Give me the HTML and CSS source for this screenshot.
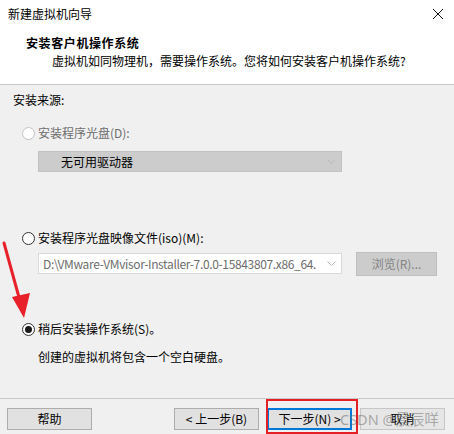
FILE: index.html
```html
<!DOCTYPE html>
<html lang="zh-CN">
<head>
<meta charset="utf-8">
<title>新建虚拟机向导</title>
<link rel="stylesheet" href="styles.css">
</head>
<body>
<div class="window">
  <div class="titlebar">
    <span class="title">新建虚拟机向导</span>
    <svg class="close" width="12" height="12" viewBox="0 0 12 12"><path d="M1 1 L11 11 M11 1 L1 11" stroke="#111" stroke-width="1" fill="none"/></svg>
  </div>
  <div class="header">
    <div class="h-title">安装客户机操作系统</div>
    <div class="h-sub">虚拟机如同物理机，需要操作系统。您将如何安装客户机操作系统?</div>
  </div>
  <div class="content">
    <div class="source">安装来源:</div>
    <div class="opt opt1 disabled"><span class="radio"></span><span>安装程序光盘(D):</span></div>
    <div class="combo combo-disabled"><span class="combo-text">无可用驱动器</span><svg class="chev" width="9" height="5" viewBox="0 0 9 5"><path d="M0.5 0.5 L4.5 4.5 L8.5 0.5" stroke="#b8b8b8" fill="none"/></svg></div>
    <div class="opt opt2"><span class="radio"></span><span>安装程序光盘映像文件(iso)(M):</span></div>
    <div class="iso-row">
      <div class="combo combo-iso"><span class="combo-text">D:\VMware-VMvisor-Installer-7.0.0-15843807.x86_64.</span><svg class="chev" width="9" height="5" viewBox="0 0 9 5"><path d="M0.5 0.5 L4.5 4.5 L8.5 0.5" stroke="#b8b8b8" fill="none"/></svg></div>
      <div class="btn btn-disabled browse">浏览(R)...</div>
    </div>
    <div class="opt opt3"><span class="radio checked"></span><span>稍后安装操作系统(S)。</span></div>
    <div class="desc">创建的虚拟机将包含一个空白硬盘。</div>
  </div>
  <div class="footer">
    <div class="btn">帮助</div>
    <div class="spacer"></div>
    <div class="btn">&lt; 上一步(B)</div>
    <div class="btn btn-default">下一步(N) &gt;</div>
    <div class="btn cancel">取消</div>
  </div>
  <div class="highlight"></div>
  <div class="watermark">CSDN @晨辰咩</div>
  <svg class="arrow" width="40" height="90" viewBox="0 0 40 90"><path d="M4 3 L20 61" stroke="#e8202a" stroke-width="3" fill="none" stroke-linecap="round"/><path d="M12 57 L30 53 L24 78 Z" fill="#e8202a"/></svg>
</div>
</body>
</html>
```

FILE: styles.css
```css
* { box-sizing: border-box; }
html, body { margin: 0; padding: 0; }
body {
  font-family: "Noto Sans CJK SC", "Microsoft YaHei", "Noto Sans", sans-serif;
  font-size: 12px;
  line-height: 16px;
  color: #000;
  background: #f0f0f0;
}
.window { position: relative; width: 454px; height: 434px; overflow: hidden; background: #f0f0f0; }
.titlebar {
  height: 28px;
  background: #fff;
  display: flex;
  align-items: center;
  justify-content: space-between;
  padding: 0 10px 0 8px;
}
.title { font-size: 12px; }
.close { display: block; }
.header {
  height: 57px;
  background: #fff;
  padding-top: 7px;
  border-bottom: 1px solid #c9c9c9;
}
.h-title { font-weight: bold; padding-left: 26px; height: 16px; letter-spacing: 0.6px; }
.h-sub { padding-left: 52px; margin-top: 2px; letter-spacing: 0; }
.content { height: 314px; padding-top: 7px; border-bottom: 1px solid #c9c9c9; }
.source { padding-left: 13px; height: 16px; }
.opt { display: flex; align-items: center; gap: 3px; padding-left: 22px; height: 16px; }
.opt1 { margin-top: 17px; }
.opt2 { margin-top: 58px; }
.opt3 { margin-top: 45px; }
.disabled { color: #6d6d6d; }
.radio {
  width: 13px; height: 13px; border-radius: 50%;
  border: 1px solid #333; background: #fff;
  display: inline-flex; align-items: center; justify-content: center;
  flex: none;
}
.disabled .radio { border-color: #c4c4c4; }
.radio.checked::after { content: ""; width: 7px; height: 7px; border-radius: 50%; background: #1a1a1a; }
.combo {
  position: relative;
  margin-left: 38px;
  width: 304px;
  display: flex;
  align-items: center;
  justify-content: space-between;
  padding: 0 5px 0 22px;
  flex: none;
}
.combo-disabled { margin-top: 10px; height: 21px; background: #cccccc; border: 1px solid #c2c2c2; }
.combo-text { white-space: nowrap; overflow: hidden; }
.chev { flex: none; }
.iso-row { display: flex; align-items: flex-start; margin-top: 6px; height: 24px; }
.combo-iso {
  margin-top: 1px; height: 21px; background: #fff; border: 1px solid #d9d9d9;
  padding-left: 4px; color: #6d6d6d; font-size: 12px; letter-spacing: -0.35px;
}
.combo-iso .combo-text { width: 282px; }
.btn {
  width: 85px; height: 22px;
  background: #e1e1e1; border: 1px solid #adadad;
  display: flex; align-items: center; justify-content: center;
  flex: none;
}
.btn-disabled { background: #cccccc; border-color: #bfbfbf; color: #838383; }
.browse { margin-left: 14px; width: 81px; height: 24px; }
.desc { margin-top: 12px; padding-left: 38px; height: 16px; }
.footer { display: flex; align-items: flex-start; padding: 9px 9px 0 7px; gap: 8px; }
.spacer { flex: 1; }
.btn-default { border: 2px solid #0078d7; }
.cancel { background: #e6e6e6; border-color: #c6c6c6; }
.highlight {
  position: absolute; left: 266px; top: 399px; width: 92px; height: 35px;
  border: 2px solid #e41f25;
}
.watermark {
  position: absolute; left: 340px; top: 410px;
  font-family: "Noto Sans", "Noto Sans CJK SC", sans-serif;
  font-size: 14.5px; line-height: 18px;
  color: rgba(110, 110, 110, 0.55);
  white-space: nowrap;
}
.arrow { position: absolute; left: 0; top: 240px; }
```
